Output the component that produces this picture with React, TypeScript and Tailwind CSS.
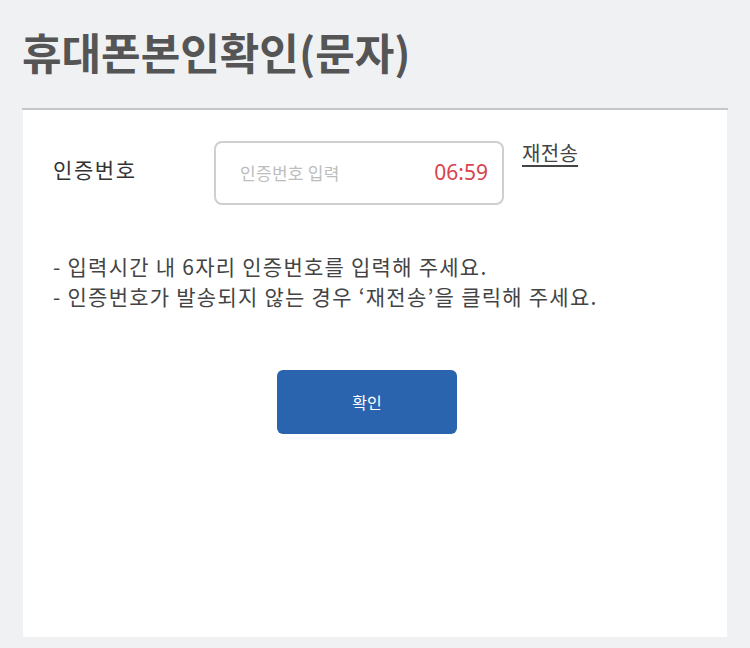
import React, { useState } from 'react';

const App: React.FC = () => {
  const [code, setCode] = useState('');

  return (
    <div
      className="min-h-[648px] w-[750px] bg-[#f0f1f3] pt-[21px] pb-[11px] flex flex-col"
      style={{ fontFamily: '"Noto Sans CJK KR", "Noto Sans", sans-serif' }}
    >
      <h1 className="px-[22px] text-[43px] leading-[60px] font-bold text-[#555555] h-[87px]">
        휴대폰본인확인(문자)
      </h1>

      <div className="mx-[22px] h-[2px] bg-[#c4c6ca]" />

      <div className="mx-[23px] flex-1 bg-white pl-[30px] pt-[31px]">
        <div className="flex items-start">
          <div className="w-[161px] pt-[13px] text-[21px] leading-[30px] tracking-[1.6px] text-[#333333]">인증번호</div>
          <div className="w-[290px] h-[64px] rounded-[8px] border-2 border-[#cfcfcf] flex items-center pl-[24px] pr-[14px]">
            <input
              value={code}
              onChange={e => setCode(e.target.value)}
              placeholder="인증번호 입력"
              className="flex-1 min-w-0 bg-transparent outline-none text-[17px] tracking-[0.3px] text-[#333] placeholder-[#bdbdbd]"
            />
            <span className="text-[21px] text-[#d9434d]" style={{ fontFamily: '"Noto Sans", sans-serif' }}>06:59</span>
          </div>
          <a className="ml-[18px] -mt-[3px] text-[20px] leading-[30px] tracking-[0.3px] text-[#444444] underline underline-offset-[4px] cursor-pointer">
            재전송
          </a>
        </div>

        <div className="mt-[46px] text-[21px] leading-[30px] tracking-[1.25px] text-[#444444]">
          <p>- 입력시간 내 6자리 인증번호를 입력해 주세요.</p>
          <p>- 인증번호가 발송되지 않는 경우 ‘재전송’을 클릭해 주세요.</p>
        </div>

        <div className="flex justify-center pr-[46px] mt-[59px]">
          <button className="w-[180px] h-[64px] rounded-[6px] bg-[#2b64ae] text-white text-[16px]">확인</button>
        </div>
      </div>
    </div>
  );
};

export default App;
